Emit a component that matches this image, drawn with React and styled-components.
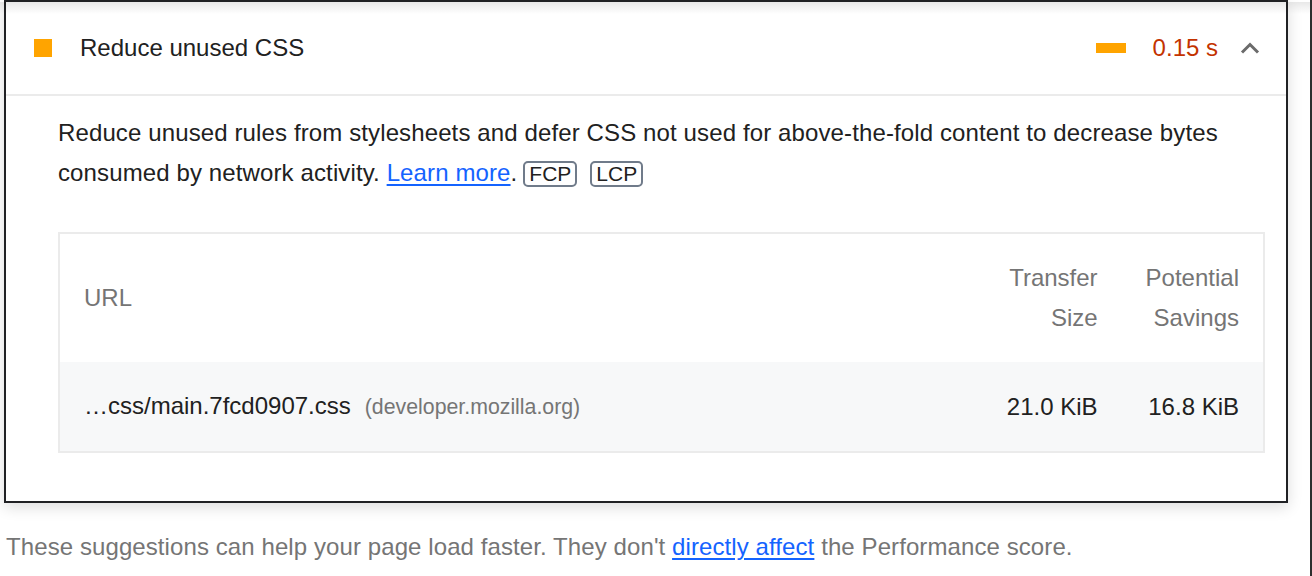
import React from 'react';
import styled, { createGlobalStyle } from 'styled-components';

const GlobalStyle = createGlobalStyle`
  html, body {
    margin: 0;
    padding: 0;
    background: #ffffff;
  }
  body {
    font-family: "Liberation Sans", Arial, Helvetica, sans-serif;
    color: #212121;
  }
`;

const Page = styled.div`
  position: relative;
  box-sizing: border-box;
  width: 1312px;
  height: 576px;
  padding: 0 22px 0 4px;
  border-right: 2px solid #2e2e2e;
  overflow: hidden;

  /* shadow cast by the sticky bar above the cut */
  &::before {
    content: '';
    position: absolute;
    left: 0;
    right: 0;
    top: 2px;
    height: 12px;
    background: linear-gradient(rgba(0, 0, 0, 0.09), rgba(0, 0, 0, 0));
    pointer-events: none;
  }
`;

const Card = styled.section`
  border: 2px solid #202124;
  background: #ffffff;
  box-shadow: 0 4px 14px rgba(0, 0, 0, 0.14);
`;

const AuditHeader = styled.div`
  display: flex;
  align-items: center;
  height: 92px;
  padding: 0 26px 0 28px;
  border-bottom: 2px solid #ebebeb;
`;

const ScoreIcon = styled.span`
  width: 18px;
  height: 18px;
  background: #ffa400;
  flex: none;
`;

const Title = styled.span`
  flex: 1;
  margin-left: 28px;
  font-size: 24px;
  line-height: 40px;
  color: #212121;
`;

const SavingsBar = styled.span`
  width: 30px;
  height: 10px;
  background: #ffa400;
  flex: none;
`;

const SavingsValue = styled.span`
  margin-left: 27px;
  font-size: 24px;
  line-height: 40px;
  color: #c33300;
`;

const Chevron = styled.svg`
  margin-left: 22px;
  width: 20px;
  height: 12px;
  flex: none;
`;

const AuditBody = styled.div`
  padding: 17px 21px 48px 52px;
`;

const Description = styled.p`
  margin: 0 0 39px 0;
  font-size: 24px;
  line-height: 40px;
  letter-spacing: 0.12px;
  color: #212121;
`;

const Link = styled.a`
  color: #1463ff;
  text-decoration: underline;
  text-underline-offset: 3px;
`;

const Acronym = styled.span`
  display: inline-block;
  box-sizing: border-box;
  height: 26px;
  padding: 0 4px;
  margin-left: ${(p) => p.gap || 0}px;
  border: 2px solid #707b8a;
  border-radius: 5px;
  font-size: 21px;
  line-height: 22px;
  letter-spacing: 0;
  color: #212121;
`;

const Table = styled.table`
  width: 100%;
  border-collapse: collapse;
  border: 2px solid #ebebeb;
  font-size: 24px;
  line-height: 40px;
`;

const Th = styled.th`
  padding: 24px;
  font-weight: normal;
  color: #757575;
  text-align: ${(p) => (p.numeric ? 'right' : 'left')};
  width: ${(p) => (p.numeric ? '1px' : 'auto')};
`;

const Row = styled.tr`
  background: #f7f8f9;
`;

const Td = styled.td`
  padding: 24px;
  color: #212121;
  white-space: nowrap;
  text-align: ${(p) => (p.numeric ? 'right' : 'left')};
`;

const Host = styled.span`
  margin-left: 14px;
  font-size: 21.3px;
  color: #757575;
`;

const Footer = styled.p`
  margin: 24px 0 0 2px;
  font-size: 24px;
  line-height: 40px;
  letter-spacing: 0.09px;
  color: #757575;
`;

const App = () => {
  return (
    <>
      <GlobalStyle />
      <Page>
        <Card>
          <AuditHeader>
            <ScoreIcon />
            <Title>Reduce unused CSS</Title>
            <SavingsBar />
            <SavingsValue>0.15&nbsp;s</SavingsValue>
            <Chevron viewBox="0 0 20 12">
              <path d="M2 10.5 L10 2.5 L18 10.5" fill="none" stroke="#6b6b6b" strokeWidth="3" />
            </Chevron>
          </AuditHeader>
          <AuditBody>
            <Description>
              Reduce unused rules from stylesheets and defer CSS not used for above-the-fold content to
              decrease bytes consumed by network activity. <Link href="#">Learn more</Link>.
              <Acronym gap={6}>FCP</Acronym>
              <Acronym gap={13}>LCP</Acronym>
            </Description>
            <Table>
              <thead>
                <tr>
                  <Th>URL</Th>
                  <Th numeric>Transfer Size</Th>
                  <Th numeric>Potential Savings</Th>
                </tr>
              </thead>
              <tbody>
                <Row>
                  <Td>
                    …css/main.7fcd0907.css<Host>(developer.mozilla.org)</Host>
                  </Td>
                  <Td numeric>21.0 KiB</Td>
                  <Td numeric>16.8 KiB</Td>
                </Row>
              </tbody>
            </Table>
          </AuditBody>
        </Card>
        <Footer>
          These suggestions can help your page load faster. They don't{' '}
          <Link href="#">directly affect</Link> the Performance score.
        </Footer>
      </Page>
    </>
  );
};

export default App;
